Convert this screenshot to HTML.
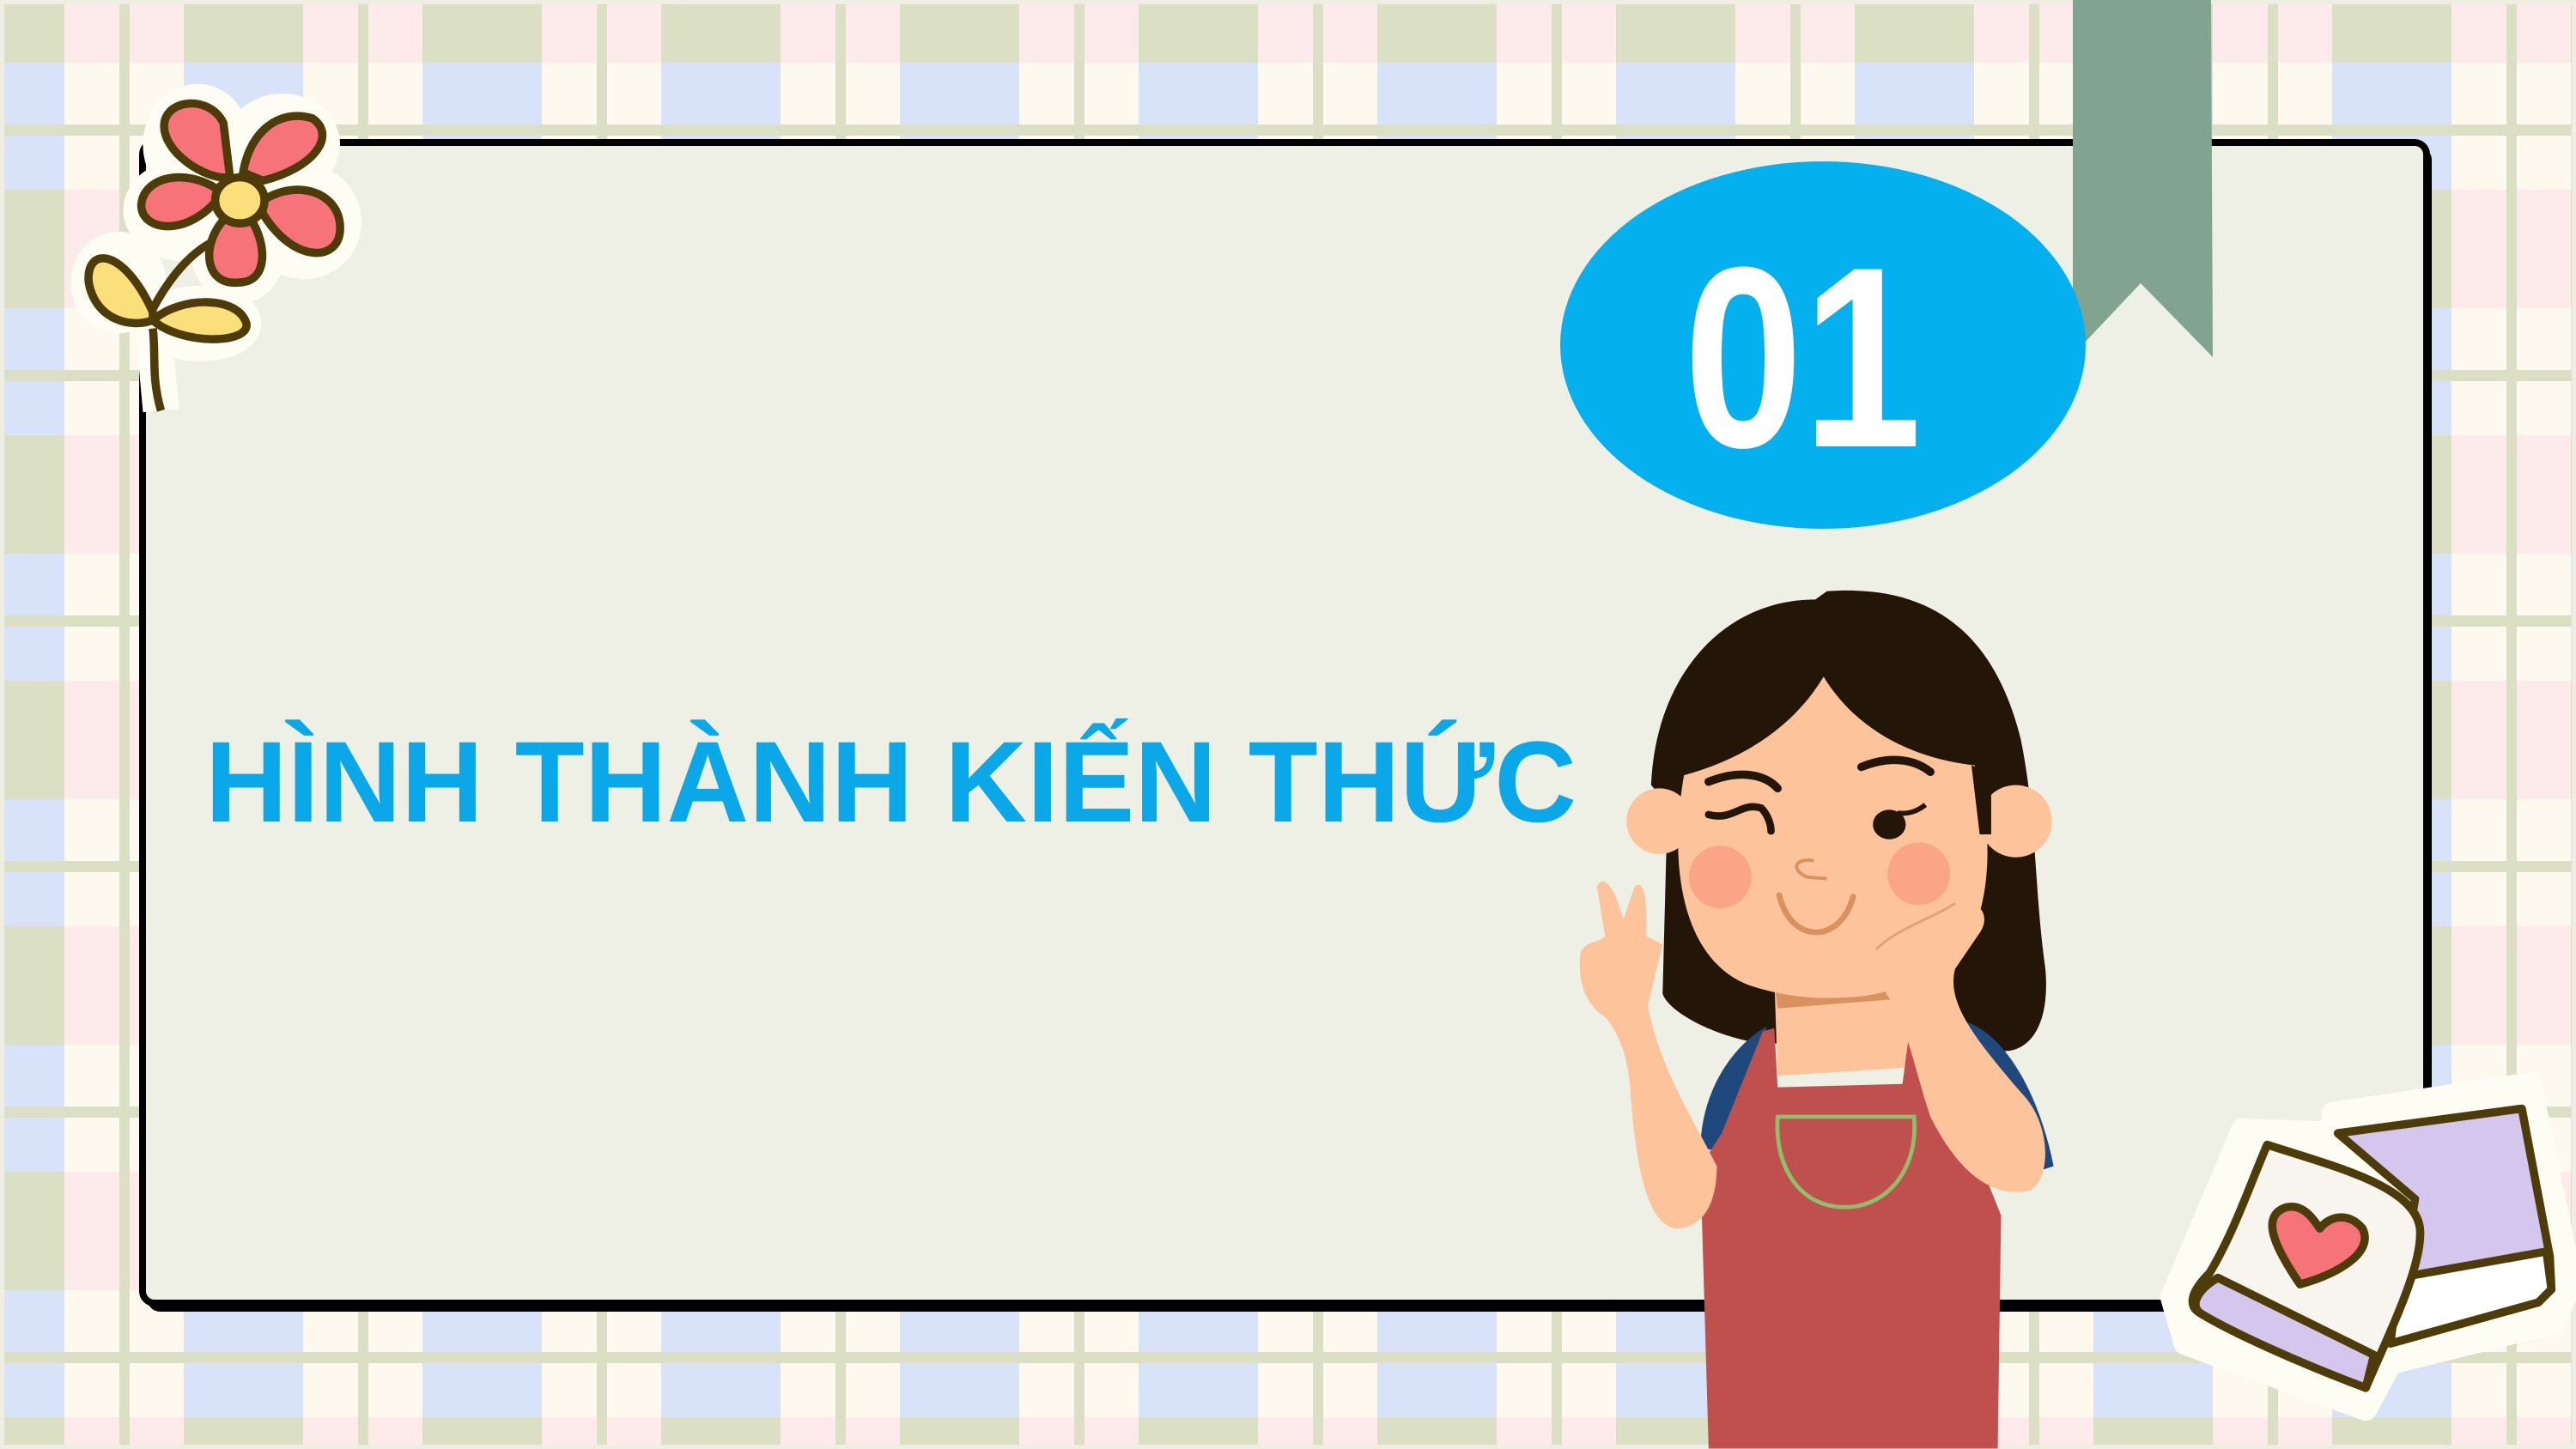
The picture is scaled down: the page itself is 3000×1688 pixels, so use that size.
<!DOCTYPE html>
<html><head><meta charset="utf-8"><style>
html,body{margin:0;padding:0;background:#fdf9ee;}
svg{display:block}
</style></head><body>
<svg width="3000" height="1688" viewBox="0 0 3000 1688" xmlns="http://www.w3.org/2000/svg">
<defs>
<pattern id="pl" patternUnits="userSpaceOnUse" x="-64" y="-65" width="278" height="286">
<rect width="278" height="286" fill="#fdf9ee"/>
<rect width="278" height="138" fill="#fdeaea"/>
<rect width="139" height="286" fill="#d8e2f8"/>
<rect width="139" height="138" fill="#dbdfc4"/>
<rect x="203" width="12" height="286" fill="#dbdfc4"/>
<rect y="210" width="278" height="13" fill="#dbdfc4"/>
</pattern>
</defs>
<rect width="3000" height="1688" fill="url(#pl)"/>
<rect x="2.5" y="2.5" width="2995" height="1683" fill="none" stroke="#eeeee2" stroke-width="5"/>
<!-- board -->
<rect x="172" y="172" width="2660" height="1356" rx="14" fill="#000"/>
<rect x="166" y="166" width="2660" height="1352" rx="14" fill="#eef0e6" stroke="#000" stroke-width="8"/>
<!-- ribbon -->
<path d="M2414,0 L2575,0 L2577,416 L2493,330 L2425,402 L2414,400 Z" fill="#82a390"/>
<!-- oval -->
<ellipse cx="2123" cy="402" rx="306" ry="214" fill="#05b0ef"/>
<text x="1961" y="520" textLength="277" lengthAdjust="spacingAndGlyphs" font-family="Liberation Sans, sans-serif" font-weight="bold" font-size="300" fill="#fff">01</text>
<!-- title -->
<text x="239" y="957" textLength="1597" lengthAdjust="spacingAndGlyphs" font-family="Liberation Sans, sans-serif" font-weight="bold" font-size="134" fill="#0aa8e8">HÌNH THÀNH KIẾN THỨC</text>

<g transform="scale(1.9133)">
<!-- flower -->
<g stroke="#fefdf4" stroke-width="22" stroke-linejoin="round" fill="#fefdf4">
<ellipse cx="120" cy="88" rx="22" ry="26"/><ellipse cx="172" cy="88" rx="24" ry="20"/>
<ellipse cx="112" cy="128" rx="26" ry="20"/><ellipse cx="185" cy="135" rx="24" ry="24"/>
<ellipse cx="145" cy="152" rx="18" ry="22"/><ellipse cx="72" cy="172" rx="18" ry="20"/>
<ellipse cx="122" cy="197" rx="26" ry="12"/><path d="M93,195 L98,250" fill="none"/>
</g>
<g stroke="#4d3c0a" stroke-width="5" fill="#f7737a">
<path d="M93,200 C95,215 92,230 98,250" fill="none"/>
<path d="M92,190 C105,165 120,150 135,145" fill="none"/>
<path d="M93,195 C80,200 58,195 54,172 C52,150 75,150 93,190 Z" fill="#fadf7a"/>
<path d="M93,195 C110,180 145,180 150,197 C152,210 110,210 93,195 Z" fill="#fadf7a"/>
<path d="M140,108 C125,110 98,92 100,75 C102,60 128,58 136,75 Z"/>
<path d="M148,105 C152,80 170,66 190,72 C205,82 192,102 160,110 Z"/>
<path d="M132,122 C112,145 86,140 86,125 C87,108 112,102 132,115 Z"/>
<path d="M160,122 C182,108 208,118 207,140 C206,160 178,160 160,130 Z"/>
<path d="M136,134 C122,150 125,174 145,172 C164,172 162,148 153,134 Z"/>
<ellipse cx="146" cy="122" rx="15" ry="14" fill="#fadf7a"/>
</g>
<!-- cards -->
<path d="M1420,678 L1540,660 L1565,780 L1555,805 L1455,830 L1440,858 L1330,818 L1322,790 L1365,688 L1420,690 Z" fill="#fefdf4" stroke="#fefdf4" stroke-width="14" stroke-linejoin="round"/>
<g stroke="#4d3c0a" stroke-width="5" stroke-linejoin="round">
<path d="M1423,690 L1535,675 L1552,765 L1553,785 L1545,793 L1455,818 L1470,730 Z" fill="#d5c6ee"/>
<path d="M1460,778 L1550,762 L1553,785 L1545,793 L1455,818 Z" fill="#fff"/>
<path d="M1380,697 C1420,710 1470,722 1473,748 C1475,770 1455,810 1440,845 C1400,830 1360,812 1340,800 C1330,795 1335,785 1345,775 C1360,750 1370,720 1380,697 Z" fill="#f8f4ee"/>
<path d="M1350,778 L1445,825 L1440,845 C1400,830 1360,812 1340,800 C1332,795 1338,785 1350,778 Z" fill="#d5c6ee"/>
<path d="M1400,782 C1385,760 1375,740 1392,735 C1402,733 1408,742 1412,748 C1418,740 1430,738 1438,748 C1445,762 1425,775 1400,782 Z" fill="#f7737a"/>
</g>
<!-- girl -->
<path d="M1005,478 C1008,410 1050,365 1105,365 L1112,360 C1180,355 1215,390 1230,450 C1240,500 1238,540 1245,590 C1248,625 1235,640 1220,640 L1070,635 C1040,630 1015,615 1012,605 L1015,490 Z" fill="#231508"/>
<path d="M1080,595 L1160,595 L1162,650 L1082,655 Z" fill="#fdc39a"/>
<path d="M1080,598 C1110,612 1140,608 1158,600 L1158,608 L1082,614 Z" fill="#d9915e"/>
<path d="M1025,472 C1062,462 1092,442 1110,412 C1130,445 1165,462 1202,466 C1215,510 1212,560 1190,585 C1160,607 1110,615 1065,600 C1025,585 1015,530 1025,472 Z" fill="#fdc39a"/>
<circle cx="1010" cy="500" r="20" fill="#fdc39a"/>
<circle cx="1227" cy="500" r="22" fill="#fdc39a"/>
<path d="M1200,466 L1205,508 L1212,508 L1212,470 Z" fill="#231508"/>
<circle cx="1047" cy="534" r="19" fill="#faa488"/>
<circle cx="1168" cy="532" r="19" fill="#faa488"/>
<path d="M1040,476 C1060,468 1075,472 1082,480" stroke="#231508" stroke-width="5" fill="none" stroke-linecap="round"/>
<path d="M1133,467 C1150,460 1165,462 1175,470" stroke="#231508" stroke-width="5" fill="none" stroke-linecap="round"/>
<path d="M1040,496 C1055,500 1060,488 1072,492 C1076,496 1078,502 1078,506" stroke="#231508" stroke-width="4.5" fill="none" stroke-linecap="round"/>
<ellipse cx="1150" cy="502" rx="10" ry="9" fill="#231508"/>
<path d="M1155,495 C1163,496 1168,493 1172,490" stroke="#231508" stroke-width="3" fill="none"/>
<path d="M1104,524 C1092,522 1090,530 1100,534 L1112,535" stroke="#d9915e" stroke-width="2" fill="none"/>
<path d="M1083,545 C1090,575 1120,575 1128,546" stroke="#d9915e" stroke-width="3.5" fill="none" stroke-linecap="round"/>
<path d="M1035,700 C1035,670 1050,640 1075,625 L1080,700 Z" fill="#1f497d"/>
<path d="M1185,620 C1215,620 1240,660 1250,710 L1220,720 Z" fill="#1f497d"/>
<path d="M1073,628 L1080,626 L1082,662 L1158,660 L1162,630 L1190,670 L1218,740 L1216,882 L1040,882 L1035,710 L1048,690 Z" fill="#c0504d"/>
<path d="M1082,680 L1165,680 C1168,710 1150,735 1123,735 C1095,735 1080,710 1082,680 Z" fill="none" stroke="#8cc06b" stroke-width="2.5"/>
<path d="M1150,590 C1160,570 1180,565 1195,550 C1205,548 1212,558 1205,568 L1190,590 C1185,610 1200,630 1230,665 C1250,685 1248,720 1235,725 C1210,730 1190,710 1175,680 C1165,650 1160,620 1148,605 Z" fill="#fdc39a"/>
<path d="M1142,578 C1155,565 1175,560 1190,550" stroke="#e0a07a" stroke-width="1.5" fill="none"/>
<path d="M1003,612 C1010,650 1030,680 1045,710 C1045,735 1035,748 1020,748 C1000,745 995,700 992,660 C990,640 985,630 978,620 C965,612 960,598 962,580 C966,572 972,575 977,570 L972,540 C975,533 982,536 988,560 L995,540 C1000,535 1003,545 1002,570 L1012,575 Z" fill="#fdc39a"/>
</g>
</svg>
</body></html>
